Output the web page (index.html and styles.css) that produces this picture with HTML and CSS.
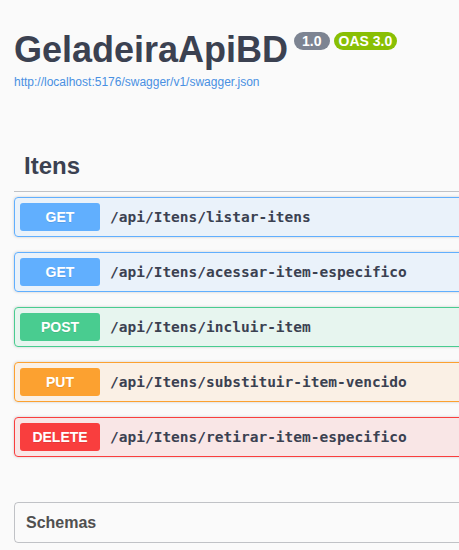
FILE: index.html
```html
<!DOCTYPE html>
<html lang="pt">
<head>
<meta charset="utf-8">
<title>GeladeiraApiBD</title>
<link rel="stylesheet" href="styles.css">
</head>
<body>
<div class="wrapper">
  <div class="info">
    <div class="title">
      <h2 class="title-text">GeladeiraApiBD</h2>
      <span class="stamp stamp-version">1.0</span>
      <span class="stamp stamp-oas">OAS 3.0</span>
    </div>
    <a class="spec-link" href="#">http://localhost:5176/swagger/v1/swagger.json</a>
  </div>

  <section class="tag-section">
    <h3 class="tag">Itens</h3>
    <div class="ops">
      <div class="opblock op-get">
        <span class="method">GET</span>
        <span class="path">/api/Itens/listar-itens</span>
      </div>
      <div class="opblock op-get">
        <span class="method">GET</span>
        <span class="path">/api/Itens/acessar-item-especifico</span>
      </div>
      <div class="opblock op-post">
        <span class="method">POST</span>
        <span class="path">/api/Itens/incluir-item</span>
      </div>
      <div class="opblock op-put">
        <span class="method">PUT</span>
        <span class="path">/api/Itens/substituir-item-vencido</span>
      </div>
      <div class="opblock op-delete">
        <span class="method">DELETE</span>
        <span class="path">/api/Itens/retirar-item-especifico</span>
      </div>
    </div>
  </section>

  <section class="models">
    <h4 class="models-title">Schemas</h4>
  </section>
</div>
</body>
</html>
```
FILE: styles.css
```css
html, body {
  margin: 0;
  padding: 0;
  background: #fafafa;
  overflow: hidden;
}

body {
  font-family: "Liberation Sans", Arial, sans-serif;
  color: #3b4151;
  width: 459px;
  height: 550px;
}

.wrapper {
  width: 700px;
  padding: 32px 0 0 14px;
  box-sizing: border-box;
}

.title {
  display: flex;
  align-items: flex-start;
}

.title-text {
  margin: 0;
  font-size: 36px;
  line-height: 36px;
  font-weight: 700;
  color: #3b4151;
}

.stamp {
  display: inline-block;
  font-size: 14px;
  line-height: 14px;
  font-weight: 700;
  color: #fff;
  border-radius: 57px;
}

.stamp-version {
  background: #7d8492;
  padding: 2px 8px;
  margin-left: 6px;
}

.stamp-oas {
  background: #89bf04;
  padding: 2px 5px;
  margin-left: 4px;
}

.spec-link {
  display: block;
  margin-top: 6px;
  font-size: 12px;
  line-height: 16px;
  color: #4990e2;
  text-decoration: none;
}

.tag-section {
  margin-top: 54px;
}

.tag {
  margin: 0;
  padding: 10px 10px 13px 10px;
  font-size: 24px;
  line-height: 24px;
  font-weight: 700;
  color: #3b4151;
  border-bottom: 1px solid rgba(59, 65, 81, 0.3);
}

.ops {
  display: flex;
  flex-direction: column;
  gap: 15px;
  margin-top: 5px;
}

.opblock {
  display: flex;
  align-items: center;
  height: 40px;
  box-sizing: border-box;
  padding: 0 5px;
  border: 1px solid;
  border-radius: 4px;
  box-shadow: 0 0 3px rgba(0, 0, 0, 0.19);
}

.method {
  width: 80px;
  height: 28px;
  line-height: 28px;
  text-align: center;
  font-size: 14px;
  font-weight: 700;
  color: #fff;
  border-radius: 3px;
  text-shadow: 0 1px 0 rgba(0, 0, 0, 0.1);
  flex-shrink: 0;
}

.path {
  margin-left: 10px;
  font-family: "DejaVu Sans Mono", "Liberation Mono", monospace;
  font-size: 14.5px;
  font-weight: 700;
  color: #3b4151;
}

.op-get { background: rgba(97, 175, 254, 0.1); border-color: #61affe; }
.op-get .method { background: #61affe; }
.op-post { background: rgba(73, 204, 144, 0.1); border-color: #49cc90; }
.op-post .method { background: #49cc90; }
.op-put { background: rgba(252, 161, 48, 0.1); border-color: #fca130; }
.op-put .method { background: #fca130; }
.op-delete { background: rgba(249, 62, 62, 0.1); border-color: #f93e3e; }
.op-delete .method { background: #f93e3e; }

.models {
  margin-top: 45px;
  height: 41px;
  box-sizing: border-box;
  border: 1px solid rgba(59, 65, 81, 0.3);
  border-radius: 4px;
  display: flex;
  align-items: center;
  padding-left: 11px;
}

.models-title {
  margin: 0;
  font-size: 16px;
  font-weight: 700;
  color: #505050;
}
```
